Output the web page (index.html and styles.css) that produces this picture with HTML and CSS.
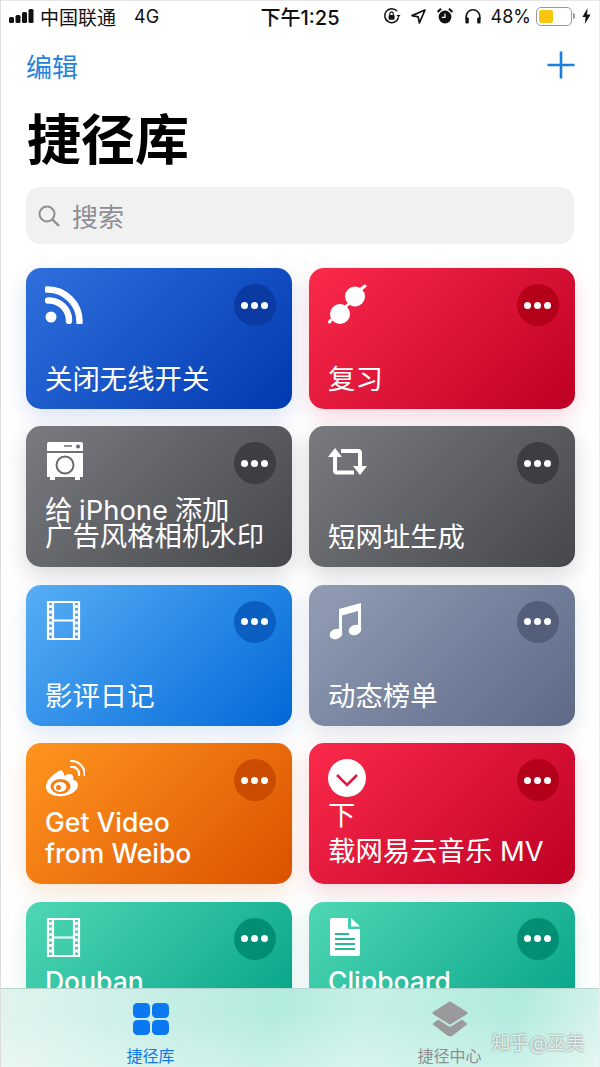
FILE: index.html
```html
<!DOCTYPE html>
<html lang="zh-CN">
<head>
    <meta charset="UTF-8">
    <meta name="viewport" content="width=device-width, initial-scale=1.0">
    <title>捷径库</title>
    <link rel="stylesheet" href="styles.css">
</head>
<body>
    <div class="phone">
        <div class="status-bar">
            <div class="status-left">
                <svg class="signal" width="25" height="14" viewBox="0 0 25 14">
                    <rect x="0" y="8" width="5" height="6" rx="1.5"/>
                    <rect x="6.500" y="6" width="5" height="8" rx="1.5"/>
                    <rect x="13" y="3" width="5" height="11" rx="1.5"/>
                    <rect x="19.500" y="0" width="5" height="14" rx="1.5"/>
                </svg>
                <span class="carrier">中国联通</span>
                <span class="network">4G</span>
            </div>
            <div class="status-time">下午1:25</div>
            <div class="status-right">
                <svg width="18" height="18" viewBox="0 0 18 18">
                    <path d="M15.5 10.5A7 7 0 1 1 14 4" fill="none" stroke="#111" stroke-width="1.5"/>
                    <path d="M13.5 8h4l-2 2.6z" fill="#111"/>
                    <rect x="5.6" y="8" width="6" height="4.8" rx="1" fill="#111"/>
                    <path d="M6.9 8V6.6a1.7 1.7 0 0 1 3.4 0V8" fill="none" stroke="#111" stroke-width="1.1"/>
                </svg>
                <svg class="gap-l" width="15" height="15" viewBox="0 0 15 15">
                    <path d="M14 1 1 6.6l6.2 1.2L8.4 14z" fill="none" stroke="#111" stroke-width="1.7" stroke-linejoin="round"/>
                </svg>
                <svg class="gap-l" width="18" height="18" viewBox="0 0 18 18">
                    <circle cx="9" cy="10" r="6.4" fill="#111"/>
                    <path d="M1.6 5 5 1.8M16.4 5 13 1.8" stroke="#111" stroke-width="2.2"/>
                    <path d="M9 6.5V10.4H5.8" fill="none" stroke="#fff" stroke-width="1.2"/>
                </svg>
                <svg class="gap-l" width="18" height="18" viewBox="0 0 18 18">
                    <path d="M2.2 12V9.5a6.8 6.8 0 0 1 13.6 0V12" fill="none" stroke="#111" stroke-width="1.6"/>
                    <rect x="1.4" y="10.4" width="3.4" height="6" rx="1.2" fill="#111"/>
                    <rect x="13.2" y="10.4" width="3.4" height="6" rx="1.2" fill="#111"/>
                </svg>
                <span class="battery-text">48%</span>
                <div class="battery"><div class="battery-level"></div></div>
                <div class="battery-cap"></div>
                <svg class="bolt" width="9" height="16" viewBox="0 0 9 16">
                    <path d="M5.6 0 0.4 9h3.2L2.8 16 8.6 6.4H5z" fill="#111"/>
                </svg>
            </div>
        </div>

        <div class="nav-bar">
            <a class="edit-link">编辑</a>
            <svg class="add-btn" width="30" height="30" viewBox="0 0 30 30">
                <path d="M15 1.500v27M1.500 15h27" stroke="#1a7fdc" stroke-width="2.600"/>
            </svg>
        </div>

        <h1 class="page-title">捷径库</h1>

        <div class="search-box">
            <svg width="24" height="24" viewBox="0 0 24 24">
                <circle cx="10" cy="10" r="7.500" fill="none" stroke="#8e8e93" stroke-width="2"/>
                <path d="M15.500 15.500 22 22" stroke="#8e8e93" stroke-width="2.400"/>
            </svg>
            <span>搜索</span>
        </div>

        <div class="content">
            <div class="shortcut-grid">
                <div class="shortcut-card card-blue">
                    <div class="card-top">
                        <svg class="card-icon" width="40" height="40" viewBox="0 0 40 40">
                            <circle cx="6" cy="33" r="5.500" fill="#fff"/>
                            <path d="M3 16.500A20 20 0 0 1 24 37" fill="none" stroke="#fff" stroke-width="6.500" stroke-linecap="round"/>
                            <path d="M2 5.500A32 32 0 0 1 34.500 38" fill="none" stroke="#fff" stroke-width="6.500" stroke-linecap="round"/>
                        </svg>
                        <div class="more-btn"><i></i><i></i><i></i></div>
                    </div>
                    <div class="card-title">关闭无线开关</div>
                </div>

                <div class="shortcut-card card-red">
                    <div class="card-top">
                        <svg class="card-icon" width="40" height="40" viewBox="0 0 40 40">
                            <circle cx="27" cy="12.500" r="10" fill="#fff"/>
                            <circle cx="12" cy="30" r="10" fill="#fff"/>
                            <path d="M17 23 22 19" stroke="#fff" stroke-width="2.500"/>
                            <path d="M33 5 37 2M3 36 1.500 38" stroke="#fff" stroke-width="3" stroke-linecap="round"/>
                        </svg>
                        <div class="more-btn"><i></i><i></i><i></i></div>
                    </div>
                    <div class="card-title">复习</div>
                </div>

                <div class="shortcut-card card-grey">
                    <div class="card-top">
                        <svg class="card-icon" width="40" height="40" viewBox="0 0 40 40">
                            <path d="M4 0h32a2 2 0 0 1 2 2v7H2V2a2 2 0 0 1 2-2z" fill="#fff"/>
                            <path d="M2 11h36v24H2z" fill="#fff"/>
                            <path d="M5 35h5v3H5zM30 35h5v3h-5z" fill="#fff"/>
                            <circle cx="20" cy="23" r="8.500" fill="none" stroke="#696b70" stroke-width="2"/>
                            <path d="M19 4h8" stroke="#696b70" stroke-width="1.600"/>
                            <circle cx="33" cy="4.500" r="2" fill="#696b70"/>
                        </svg>
                        <div class="more-btn"><i></i><i></i><i></i></div>
                    </div>
                    <div class="card-title title-tight">给 iPhone 添加<br>广告风格相机水印</div>
                </div>

                <div class="shortcut-card card-grey">
                    <div class="card-top">
                        <svg class="card-icon" width="40" height="40" viewBox="0 0 40 40">
                            <path d="M7 13V28.500a2 2 0 0 0 2 2H26M32 26V11a2 2 0 0 0-2-2H13" fill="none" stroke="#fff" stroke-width="4"/>
                            <path d="M0 15 7 6l7 9zM25 24l7 9 7-9z" fill="#fff"/>
                        </svg>
                        <div class="more-btn"><i></i><i></i><i></i></div>
                    </div>
                    <div class="card-title">短网址生成</div>
                </div>

                <div class="shortcut-card card-sky">
                    <div class="card-top">
                        <svg class="card-icon" width="40" height="40" viewBox="0 0 40 40">
                            <path d="M3 1h31v37H3z" fill="none" stroke="#fff" stroke-width="2.200"/>
                            <path d="M8 1v37M29 1v37M8 19.500h21" stroke="#fff" stroke-width="2.200"/>
                            <path d="M5.500 4v31M31.500 4v31" stroke="#fff" stroke-width="2.600" stroke-dasharray="3 2.500"/>
                        </svg>
                        <div class="more-btn"><i></i><i></i><i></i></div>
                    </div>
                    <div class="card-title">影评日记</div>
                </div>

                <div class="shortcut-card card-slate">
                    <div class="card-top">
                        <svg class="card-icon" width="40" height="40" viewBox="0 0 40 40">
                            <path d="M11 8 33 2V29h-3V10L14 14.500V34h-3z" fill="#fff"/>
                            <ellipse cx="8" cy="33" rx="6.500" ry="5" fill="#fff" transform="rotate(-20 8 33)"/>
                            <ellipse cx="27" cy="29" rx="6.500" ry="5" fill="#fff" transform="rotate(-20 27 29)"/>
                        </svg>
                        <div class="more-btn"><i></i><i></i><i></i></div>
                    </div>
                    <div class="card-title">动态榜单</div>
                </div>

                <div class="shortcut-card card-orange">
                    <div class="card-top">
                        <svg class="card-icon" width="40" height="40" viewBox="0 0 40 40">
                            <path d="M16 11C7 15 0 23 1 29c1 6 9 9 17 8 9-1 15-6 15-11 0-3-3-5-5-5.500 1-3 0-5-3-5.500-2 0-5 1-6 2 0-2 0-4-3-6z" fill="#fff"/>
                            <ellipse cx="15.500" cy="27.500" rx="10" ry="7.500" fill="#f57f12"/>
                            <ellipse cx="15" cy="28" rx="6.500" ry="5" fill="#fff"/>
                            <circle cx="13.500" cy="28.500" r="2.500" fill="#f57f12"/>
                            <path d="M26 8a7 7 0 0 1 8 8M26 2a13 13 0 0 1 13.500 14" fill="none" stroke="#fff" stroke-width="2.200" stroke-linecap="round"/>
                        </svg>
                        <div class="more-btn"><i></i><i></i><i></i></div>
                    </div>
                    <div class="card-title title-latin">Get Video<br>from Weibo</div>
                </div>

                <div class="shortcut-card card-red">
                    <div class="card-top">
                        <svg class="card-icon" width="40" height="40" viewBox="0 0 40 40">
                            <circle cx="19" cy="19" r="19" fill="#fff"/>
                            <path d="M9 16 19 26 29 16" fill="none" stroke="#e3173e" stroke-width="2.600"/>
                        </svg>
                        <div class="more-btn"><i></i><i></i><i></i></div>
                    </div>
                    <div class="card-title title-loose">下<br>载网易云音乐 MV</div>
                </div>

                <div class="shortcut-card card-teal">
                    <div class="card-top">
                        <svg class="card-icon" width="40" height="40" viewBox="0 0 40 40">
                            <path d="M3 1h31v37H3z" fill="none" stroke="#fff" stroke-width="2.200"/>
                            <path d="M8 1v37M29 1v37M8 19.500h21" stroke="#fff" stroke-width="2.200"/>
                            <path d="M5.500 4v31M31.500 4v31" stroke="#fff" stroke-width="2.600" stroke-dasharray="3 2.500"/>
                        </svg>
                        <div class="more-btn"><i></i><i></i><i></i></div>
                    </div>
                    <div class="card-title title-latin title-top">Douban</div>
                </div>

                <div class="shortcut-card card-teal">
                    <div class="card-top">
                        <svg class="card-icon" width="40" height="40" viewBox="0 0 40 40">
                            <path d="M4 0H20V11H32V36a2 2 0 0 1-2 2H4a2 2 0 0 1-2-2V2a2 2 0 0 1 2-2z" fill="#fff"/>
                            <path d="M23 0 32 8.500H23z" fill="#fff"/>
                            <path d="M7 16H21M7 21H27M7 26H27M7 31H27" stroke="#2cb89b" stroke-width="1.800"/>
                        </svg>
                        <div class="more-btn"><i></i><i></i><i></i></div>
                    </div>
                    <div class="card-title title-latin title-top">Clipboard</div>
                </div>
            </div>
        </div>

        <div class="tab-bar">
            <div class="tab tab-active">
                <div class="tab-icon">
                    <svg width="38" height="32" viewBox="0 0 38 32">
                        <rect x="1" y="0" width="17" height="15" rx="4.500"/>
                        <rect x="20" y="0" width="17" height="15" rx="4.500"/>
                        <rect x="1" y="17" width="17" height="15" rx="4.500"/>
                        <rect x="20" y="17" width="17" height="15" rx="4.500"/>
                    </svg>
                </div>
                <span>捷径库</span>
            </div>
            <div class="tab">
                <div class="tab-icon">
                    <svg width="38" height="36" viewBox="0 0 38 36">
                        <path d="M19 2 35 12 19 22 3 12z" fill="#9a9a9c" stroke="#9a9a9c" stroke-width="3" stroke-linejoin="round"/>
                        <path d="M7 19.500 19 27 31 19.500 35.500 23 22 33.500c-2 1.500-4 1.500-6 0L2.500 23z" fill="#9a9a9c" stroke="#9a9a9c" stroke-width="1.500" stroke-linejoin="round"/>
                    </svg>
                </div>
                <span>捷径中心</span>
            </div>
            <div class="watermark">知乎 @巫美</div>
        </div>
    </div>
</body>
</html>
```

FILE: styles.css
```css
* {
    margin: 0;
    padding: 0;
    box-sizing: border-box;
}

html, body {
    height: 100%;
    overflow: hidden;
}

body {
    font-family: 'Inter', 'Noto Sans CJK SC', sans-serif;
    background: #fff;
    color: #000;
}

.phone {
    display: flex;
    flex-direction: column;
    width: 600px;
    height: 1067px;
    overflow: hidden;
    border-left: 1px solid #dcdcdc;
    border-right: 1px solid #ededed;
    border-top: 1px solid #e6e6e6;
}

/* Status bar */
.status-bar {
    display: flex;
    align-items: center;
    justify-content: space-between;
    height: 30px;
    flex-shrink: 0;
    padding: 0 8px;
    font-size: 18px;
    color: #111;
}

.status-left, .status-right {
    display: flex;
    align-items: center;
    width: 226px;
}

.status-right {
    justify-content: flex-end;
}

.signal {
    fill: #111;
    margin-right: 6px;
}

.carrier {
    font-size: 19px;
}

.network {
    margin-left: 18px;
    font-size: 18px;
}

.status-time {
    font-size: 20px;
    font-weight: 500;
    white-space: nowrap;
}

.gap-l {
    margin-left: 10px;
}

.battery-text {
    margin-left: 9px;
    font-size: 18px;
}

.battery {
    width: 36px;
    height: 19px;
    margin-left: 5px;
    padding: 2px;
    border: 1px solid #999;
    border-radius: 5px;
}

.battery-level {
    width: 48%;
    height: 100%;
    background: #f9c80e;
    border-radius: 2px;
}

.battery-cap {
    width: 2px;
    height: 6px;
    margin-left: 1px;
    background: #999;
    border-radius: 0 2px 2px 0;
}

.bolt {
    margin-left: 7px;
}

/* Navigation */
.nav-bar {
    display: flex;
    align-items: center;
    justify-content: space-between;
    height: 74px;
    flex-shrink: 0;
    padding: 0 23px 6px 25px;
}

.edit-link {
    color: #2583dc;
    font-size: 26px;
}

.page-title {
    height: 72px;
    flex-shrink: 0;
    padding-left: 26px;
    font-size: 54px;
    line-height: 72px;
    font-weight: 700;
}

.search-box {
    display: flex;
    align-items: center;
    gap: 11px;
    height: 57px;
    flex-shrink: 0;
    margin: 10px 25px 0 25px;
    padding-left: 11px;
    background: #f1f1f2;
    border-radius: 14px;
    color: #8e8e93;
    font-size: 26px;
}

/* Shortcut cards */
.content {
    flex: 1;
    min-height: 0;
    overflow: hidden;
}

.shortcut-grid {
    display: grid;
    grid-template-columns: 265.5px 265.5px;
    grid-auto-rows: 141px;
    column-gap: 17.5px;
    row-gap: 17.4px;
    padding: 24px 0 40px 25px;
}

.shortcut-card {
    display: flex;
    flex-direction: column;
    justify-content: space-between;
    padding: 16px 16px 13px 19px;
    border-radius: 15px;
    color: #fff;
    overflow: hidden;
}

.card-top {
    display: flex;
    justify-content: space-between;
    align-items: flex-start;
}

.card-icon {
    flex-shrink: 0;
    display: block;
}

.more-btn {
    display: flex;
    align-items: center;
    justify-content: center;
    gap: 3px;
    width: 42px;
    height: 42px;
    border-radius: 50%;
    background: var(--btn);
}

.more-btn i {
    width: 7px;
    height: 7px;
    background: #fff;
    border-radius: 50%;
}

.card-title {
    font-size: 27.4px;
    line-height: 33px;
    white-space: nowrap;
}

.title-tight {
    line-height: 25.500px;
    margin-bottom: 5px;
    word-spacing: -1px;
}

.title-latin {
    font-size: 26.500px;
    line-height: 31px;
    font-weight: 500;
    margin-bottom: 2px;
}

/* single line that sits where the first of two lines would */
.title-top {
    height: 62px;
}

.title-loose {
    line-height: 36px;
    margin-top: -12px;
    margin-bottom: 2px;
}

.card-blue {
    --btn: #0a3aa2;
    background: linear-gradient(135deg, #2f70dd, #0039b0);
    box-shadow: 0 8px 22px rgba(10, 60, 180, 0.15);
}

.card-red {
    --btn: #b40018;
    background: linear-gradient(135deg, #fb2a4b, #bd0024);
    box-shadow: 0 8px 22px rgba(200, 0, 50, 0.16);
}

.card-grey {
    --btn: #3c3e42;
    background: linear-gradient(135deg, #797b80, #45474b);
    box-shadow: 0 8px 22px rgba(60, 60, 70, 0.2);
}

.card-sky {
    --btn: #0b5fc0;
    background: linear-gradient(135deg, #58aef5, #0068d8);
    box-shadow: 0 8px 22px rgba(20, 100, 200, 0.15);
}

.card-slate {
    --btn: #525e7a;
    background: linear-gradient(135deg, #929db5, #5d6a87);
    box-shadow: 0 8px 22px rgba(80, 90, 120, 0.17);
}

.card-orange {
    --btn: #c94c00;
    background: linear-gradient(135deg, #ff951f, #dc5100);
    box-shadow: 0 8px 22px rgba(220, 100, 0, 0.17);
}

.card-teal {
    --btn: #008f75;
    background: linear-gradient(135deg, #4fd7b4, #00a085);
    box-shadow: 0 8px 22px rgba(0, 150, 120, 0.15);
}

/* Tab bar */
.tab-bar {
    position: relative;
    display: flex;
    height: 79px;
    flex-shrink: 0;
    border-top: 1px solid #b5d6cf;
    background:
        linear-gradient(180deg, rgba(255, 255, 255, 0) 30%, rgba(255, 255, 255, 0.3) 100%),
        linear-gradient(100deg, #e2f3ef 0%, #b3ebdf 45%, #c6f0e6 60%, #b2ebde 85%, #d9f3ed 100%);
}

.tab {
    display: flex;
    flex: 1;
    flex-direction: column;
    align-items: center;
    padding-top: 8px;
    color: #8e8e93;
    font-size: 16px;
    line-height: 22px;
}

.tab-icon {
    display: flex;
    align-items: center;
    justify-content: center;
    height: 44px;
    margin-bottom: 4px;
}

.tab-active {
    color: #0f78e6;
}

.tab-active svg {
    fill: #0a78f0;
}

.watermark {
    position: absolute;
    right: 15px;
    bottom: 12px;
    color: rgba(255, 255, 255, 0.8);
    font-size: 19px;
    letter-spacing: -0.5px;
    word-spacing: -4px;
    text-shadow: 0 0 2px rgba(70, 70, 70, 0.7);
    white-space: nowrap;
}
```
